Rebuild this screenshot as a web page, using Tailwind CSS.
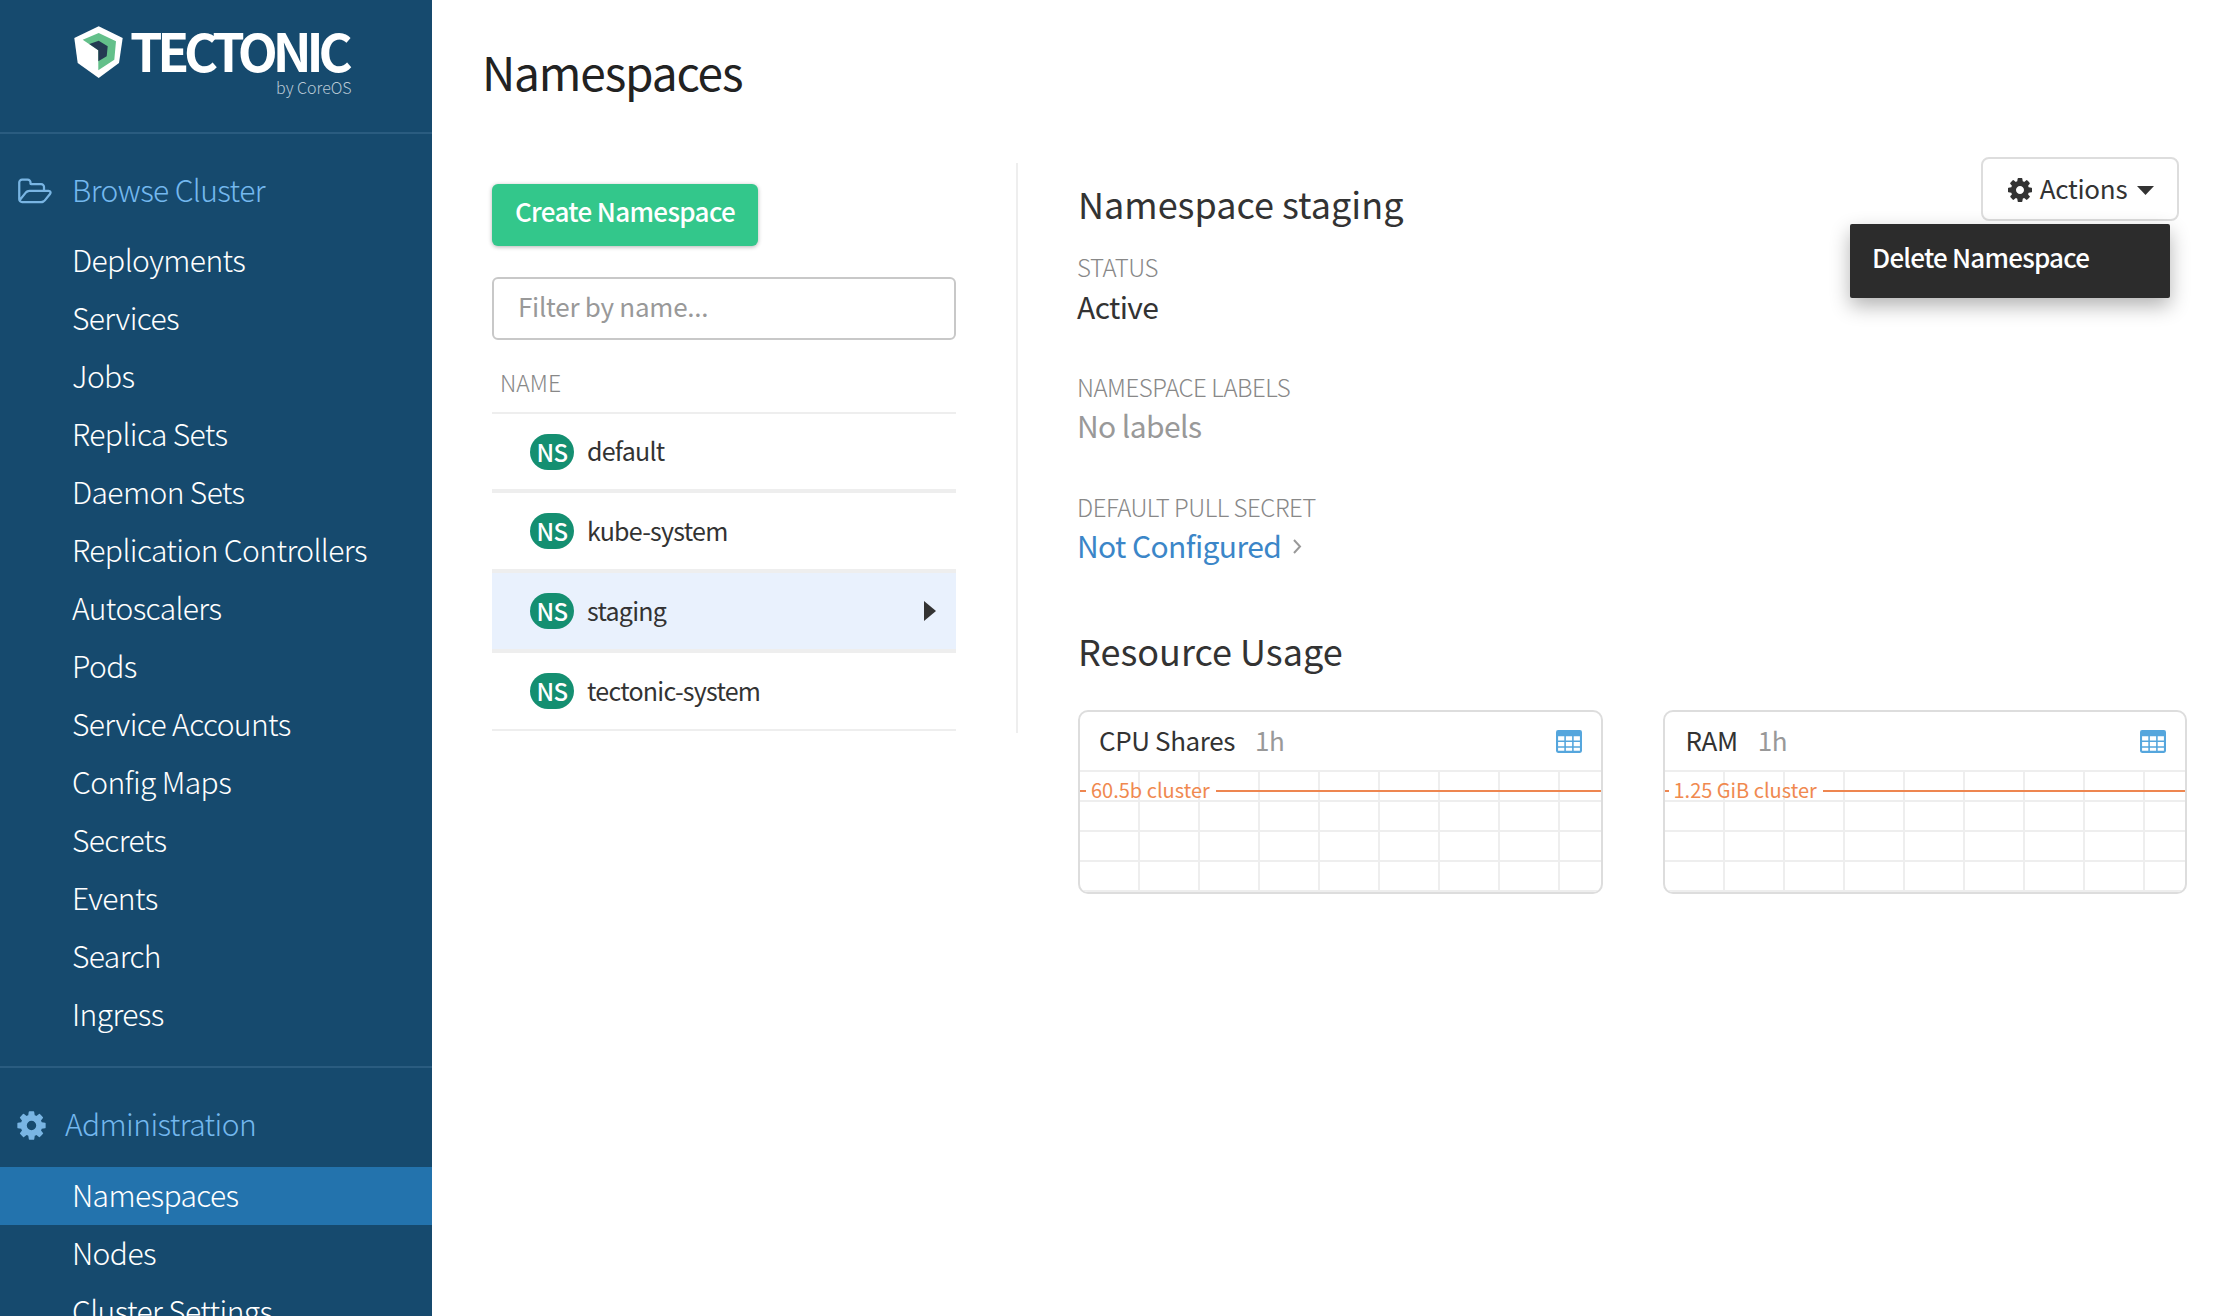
<!DOCTYPE html>
<html>
  <head>
    <meta charset="UTF-8" />
    <title>Namespaces</title>
    <script src="https://cdn.jsdelivr.net/npm/@tailwindcss/browser@4"></script>
  </head>
  <body class="bg-white font-['Noto_Sans_CJK_SC',sans-serif] text-[#333]">
    <div class="flex h-[1316px] w-[2234px] overflow-hidden">
      <!-- sidebar -->
      <aside class="w-[432px] shrink-0 h-full overflow-hidden bg-[#164a6e] text-white text-[30px] tracking-[-0.02em] font-light leading-[55px]">
        <div class="h-[134px] border-b-2 border-[#2a5c80] pl-[74px] pt-[25px] relative">
          <div class="flex items-center gap-[6px] h-[54px]">
            <svg width="50" height="54" viewBox="0 0 50 54">
              <path d="M24.700 1.300 48.700 13 45 38 24.700 53 3.700 38 .3 13z" fill="#fff" />
              <path d="M8.700 14.700 24.700 8 42 16.300 40.300 34.700 24.300 45.300 24.300 25.300z" fill="#63c08a" />
              <path d="M15.300 19 24.700 15.700 33.700 21.300 32.700 31.300 24.300 36.300 24.300 25.300z" fill="#233a52" />
            </svg>
            <span class="mb-[5px] text-[52px] font-bold leading-[44px] tracking-[-0.1em]">TECTONIC</span>
          </div>
          <div class="absolute left-[276px] top-[75px] text-[16px] tracking-normal leading-[24px] text-[#b9c9d6]">by CoreOS</div>
        </div>
        <div class="flex items-center h-[98px] pt-[12px] pl-[17px] text-[#74b8ee]">
          <svg class="w-[36px] h-[32px] mt-[5px]" viewBox="0 0 2048 1792" fill="#79b5e3"><path d="M1845 931q0-35-53-35h-1088q-40 0-85.5 21.5t-71.5 52.5l-294 363q-18 24-18 40 0 35 53 35h1088q40 0 86-22t71-53l294-363q18-22 18-39zm-1141-163h768v-160q0-40-28-68t-68-28h-576q-40 0-68-28t-28-68v-64q0-40-28-68t-68-28h-320q-40 0-68 28t-28 68v853l256-315q44-53 116-87.5t140-34.5zm1269 163q0 62-46 120l-295 363q-43 53-116 87.5t-140 34.5h-1088q-92 0-158-66t-66-158v-960q0-92 66-158t158-66h320q92 0 158 66t66 158v32h544q92 0 158 66t66 158v160h192q54 0 99 24.5t67 70.5q15 32 15 68z"/></svg>
          <span class="ml-[19px]">Browse Cluster</span>
        </div>
        <nav class="grid auto-rows-[58px] pl-[72px]">
          <a>Deployments</a>
          <a>Services</a>
          <a>Jobs</a>
          <a>Replica Sets</a>
          <a>Daemon Sets</a>
          <a>Replication Controllers</a>
          <a>Autoscalers</a>
          <a>Pods</a>
          <a>Service Accounts</a>
          <a>Config Maps</a>
          <a>Secrets</a>
          <a>Events</a>
          <a>Search</a>
          <a>Ingress</a>
        </nav>
        <div class="mt-[22px] border-t-2 border-[#2a5c80]"></div>
        <div class="flex items-center h-[99px] pt-[12px] pl-[15px] text-[#74b8ee]">
          <svg class="w-[33px] h-[33px] mt-[4px]" viewBox="0 0 1792 1792" fill="#79b5e3"><path d="M1152 896q0-106-75-181t-181-75-181 75-75 181 75 181 181 75 181-75 75-181zm512-109v222q0 12-8 23t-20 13l-185 28q-19 54-39 91 35 50 107 138 10 12 10 25t-9 23q-27 37-99 108t-94 71q-12 0-26-9l-138-108q-44 23-91 38-16 136-29 186-7 28-36 28h-222q-14 0-24.500-8.500t-11.500-21.500l-28-184q-49-16-90-37l-141 107q-10 9-25 9-14 0-25-11-126-114-165-168-7-10-7-23 0-12 8-23 15-21 51-66.500t54-70.500q-27-50-41-99l-183-27q-13-2-21-12.500t-8-23.500v-222q0-12 8-23t19-13l186-28q14-46 39-92-40-57-107-138-10-12-10-24 0-10 9-23 26-36 98.500-107.500t94.500-71.500q13 0 26 10l138 107q44-23 91-38 16-136 29-186 7-28 36-28h222q14 0 24.500 8.500t11.500 21.500l28 184q49 16 90 37l142-107q9-9 24-9 13 0 25 10 129 119 165 170 7 8 7 22 0 12-8 23-15 21-51 66.500t-54 70.500q26 50 41 98l183 28q13 2 21 12.500t8 23.500z"/></svg>
          <span class="ml-[17px]">Administration</span>
        </div>
        <nav class="grid auto-rows-[58px]">
          <a class="pl-[72px] bg-[#2373ad]">Namespaces</a>
          <a class="pl-[72px]">Nodes</a>
          <a class="pl-[72px]">Cluster Settings</a>
        </nav>
      </aside>

      <!-- main -->
      <main class="flex-1 min-w-0">
        <h1 class="pl-[50px] pt-[41px] h-[163px] text-[46px] leading-[60px] tracking-[-0.025em] text-[#222]">Namespaces</h1>
        <div class="flex items-start">
          <!-- list column -->
          <section class="ml-[60px] w-[464px] mr-[60px] shrink-0">
            <button class="mt-[21px] block w-[266px] h-[62px] pb-[8px] rounded-[6px] bg-[#33c78b] text-white text-[26px] tracking-[-0.025em] leading-[40px] font-medium shadow-[0_1px_4px_rgba(0,0,0,0.3)]">Create Namespace</button>
            <div class="mt-[31px] h-[63px] rounded-[6px] border-2 border-[#c8c8c8] pl-[24px] text-[26px] tracking-[-0.01em] leading-[53px] text-[#999]">Filter by name...</div>
            <div class="mt-[26px] pl-[8px] h-[48px] border-b-2 border-[#eee] text-[23px] leading-[32px] font-light text-[#888]">NAME</div>
            <div class="flex items-center h-[75px] pl-[38px]">
              <span class="w-[44px] h-[36px] rounded-full bg-[#148f71] text-white text-[24px] tracking-[-0.02em] leading-[36px] font-medium text-center">NS</span>
              <span class="ml-[13px] mb-[2px] text-[25px] tracking-[-0.03em] leading-[33px]">default</span>
            </div>
            <div class="flex items-center h-[80px] pl-[38px] border-t-4 border-[#eee]">
              <span class="w-[44px] h-[36px] rounded-full bg-[#148f71] text-white text-[24px] tracking-[-0.02em] leading-[36px] font-medium text-center">NS</span>
              <span class="ml-[13px] mb-[2px] text-[25px] tracking-[-0.03em] leading-[33px]">kube-system</span>
            </div>
            <div class="flex items-center h-[80px] pl-[38px] border-t-4 border-[#eee] bg-[#e9f1fd]">
              <span class="w-[44px] h-[36px] rounded-full bg-[#148f71] text-white text-[24px] tracking-[-0.02em] leading-[36px] font-medium text-center">NS</span>
              <span class="ml-[13px] mb-[2px] text-[25px] tracking-[-0.03em] leading-[33px]">staging</span>
              <svg class="ml-auto mr-[20px]" width="12" height="20" viewBox="0 0 12 20"><path d="M0 0 12 10 0 20z" fill="#333" /></svg>
            </div>
            <div class="flex items-center h-[80px] pl-[38px] border-t-4 border-[#eee]">
              <span class="w-[44px] h-[36px] rounded-full bg-[#148f71] text-white text-[24px] tracking-[-0.02em] leading-[36px] font-medium text-center">NS</span>
              <span class="ml-[13px] mb-[2px] text-[25px] tracking-[-0.03em] leading-[33px]">tectonic-system</span>
            </div>
            <div class="border-t-2 border-[#eee]"></div>
          </section>

          <!-- detail column -->
          <section class="flex-1 min-w-0 h-[570px] border-l-2 border-[#eee] pl-[60px]">
            <div class="flex justify-between items-start -mt-[6px] mr-[55px]">
              <h2 class="pt-[22px] text-[36px] leading-[48px] text-[#333]">Namespace staging</h2>
              <div class="relative">
                <button class="flex items-center justify-center w-[198px] h-[64px] rounded-[8px] border-2 border-[#ddd] bg-white text-[26px] tracking-[-0.01em] leading-[38px]">
                  <svg class="w-[28px] h-[28px] mr-[6px] mt-[2px]" viewBox="0 0 1792 1792" fill="#333"><path d="M1152 896q0-106-75-181t-181-75-181 75-75 181 75 181 181 75 181-75 75-181zm512-109v222q0 12-8 23t-20 13l-185 28q-19 54-39 91 35 50 107 138 10 12 10 25t-9 23q-27 37-99 108t-94 71q-12 0-26-9l-138-108q-44 23-91 38-16 136-29 186-7 28-36 28h-222q-14 0-24.500-8.500t-11.500-21.500l-28-184q-49-16-90-37l-141 107q-10 9-25 9-14 0-25-11-126-114-165-168-7-10-7-23 0-12 8-23 15-21 51-66.500t54-70.500q-27-50-41-99l-183-27q-13-2-21-12.500t-8-23.500v-222q0-12 8-23t19-13l186-28q14-46 39-92-40-57-107-138-10-12-10-24 0-10 9-23 26-36 98.500-107.500t94.500-71.500q13 0 26 10l138 107q44-23 91-38 16-136 29-186 7-28 36-28h222q14 0 24.500 8.500t11.500 21.500l28 184q49 16 90 37l142-107q9-9 24-9 13 0 25 10 129 119 165 170 7 8 7 22 0 12-8 23-15 21-51 66.500t-54 70.500q26 50 41 98l183 28q13 2 21 12.500t8 23.500z"/></svg>
                  <span class="mb-[2px]">Actions</span>
                  <svg class="ml-[10px] mt-[2px]" width="17" height="9" viewBox="0 0 17 9"><path d="M0 0h17L8.500 9z" fill="#333" /></svg>
                </button>
                <div class="absolute right-[9px] top-[67px] w-[320px] h-[74px] rounded-[2px] bg-[#2c2c2c] pl-[22px] text-white text-[26px] tracking-[-0.03em] leading-[66px] font-medium shadow-[0_8px_20px_rgba(0,0,0,0.3)]">Delete Namespace</div>
              </div>
            </div>
            <dl class="mt-[23px] -ml-[1px]">
              <dt class="text-[24px] tracking-[-0.02em] leading-[34px] font-light text-[#888]">STATUS</dt>
              <dd class="mt-[2px] text-[30px] tracking-[-0.02em] leading-[40px] text-[#333]">Active</dd>
              <dt class="mt-[44px] text-[24px] tracking-[-0.02em] leading-[34px] font-light text-[#888]">NAMESPACE LABELS</dt>
              <dd class="mt-[1px] text-[30px] tracking-[-0.02em] leading-[40px] text-[#999]">No labels</dd>
              <dt class="mt-[45px] text-[24px] tracking-[-0.02em] leading-[34px] font-light text-[#888]">DEFAULT PULL SECRET</dt>
              <dd class="mt-[1px] text-[30px] tracking-[-0.02em] leading-[40px] text-[#3b86c8] flex items-center">
                Not Configured
                <svg class="ml-[12px] mt-[3px]" width="9" height="15" viewBox="0 0 9 15"><path d="M1 1l6 6.500L1 14" fill="none" stroke="#999" stroke-width="2" /></svg>
              </dd>
            </dl>
            <h2 class="mt-[61px] text-[36px] leading-[48px]">Resource Usage</h2>
            <div class="mt-[36px] grid grid-cols-2 gap-[60px] w-[1109px]">
              <div class="h-[184px] rounded-[10px] border-2 border-[#ddd] overflow-hidden bg-white">
                <div class="flex items-center h-[58px] pb-[3px] pl-[19px] pr-[19px] text-[26px] tracking-[-0.015em]">
                  <span>CPU Shares</span><span class="ml-[20px] text-[#999]">1h</span>
                  <svg class="ml-auto mt-[4px]" width="26" height="23" viewBox="0 0 25 22"><rect width="25" height="22" rx="2" fill="#55a6dd" /><path d="M2 6h6v4H2zM9.500 6h6v4h-6zM17 6h6v4h-6zM2 11.500h6v4H2zM9.500 11.500h6v4h-6zM17 11.500h6v4h-6zM2 17h6v3H2zM9.500 17h6v3h-6zM17 17h6v3h-6z" fill="#fff" /></svg>
                </div>
                <div class="relative h-[126px] bg-[linear-gradient(to_right,#eee_2px,transparent_2px),linear-gradient(to_bottom,#eee_2px,transparent_2px)] bg-[size:60px_30px] bg-[position:58px_0]">
                  <div class="absolute left-0 right-0 top-[10px] flex items-center h-[22px] text-[#f0894f] text-[20px] leading-[22px]">
                    <span class="w-[6px] h-[2px] bg-[#ee8650]"></span>
                    <span class="ml-[4px] mb-[2px] px-[1px]">60.5b cluster</span>
                    <span class="ml-[5px] flex-1 h-[2px] bg-[#ee8650]"></span>
                  </div>
                </div>
              </div>
              <div class="h-[184px] rounded-[10px] border-2 border-[#ddd] overflow-hidden bg-white">
                <div class="flex items-center h-[58px] pb-[3px] pl-[21px] pr-[19px] text-[26px] tracking-[-0.015em]">
                  <span>RAM</span><span class="ml-[20px] text-[#999]">1h</span>
                  <svg class="ml-auto mt-[4px]" width="26" height="23" viewBox="0 0 25 22"><rect width="25" height="22" rx="2" fill="#55a6dd" /><path d="M2 6h6v4H2zM9.500 6h6v4h-6zM17 6h6v4h-6zM2 11.500h6v4H2zM9.500 11.500h6v4h-6zM17 11.500h6v4h-6zM2 17h6v3H2zM9.500 17h6v3h-6zM17 17h6v3h-6z" fill="#fff" /></svg>
                </div>
                <div class="relative h-[126px] bg-[linear-gradient(to_right,#eee_2px,transparent_2px),linear-gradient(to_bottom,#eee_2px,transparent_2px)] bg-[size:60px_30px] bg-[position:58px_0]">
                  <div class="absolute left-0 right-0 top-[10px] flex items-center h-[22px] text-[#f0894f] text-[20px] leading-[22px]">
                    <span class="w-[4px] h-[2px] bg-[#ee8650]"></span>
                    <span class="ml-[4px] mb-[2px] px-[1px]">1.25 GiB cluster</span>
                    <span class="ml-[5px] flex-1 h-[2px] bg-[#ee8650]"></span>
                  </div>
                </div>
              </div>
            </div>
          </section>
        </div>
      </main>
    </div>
  </body>
</html>
